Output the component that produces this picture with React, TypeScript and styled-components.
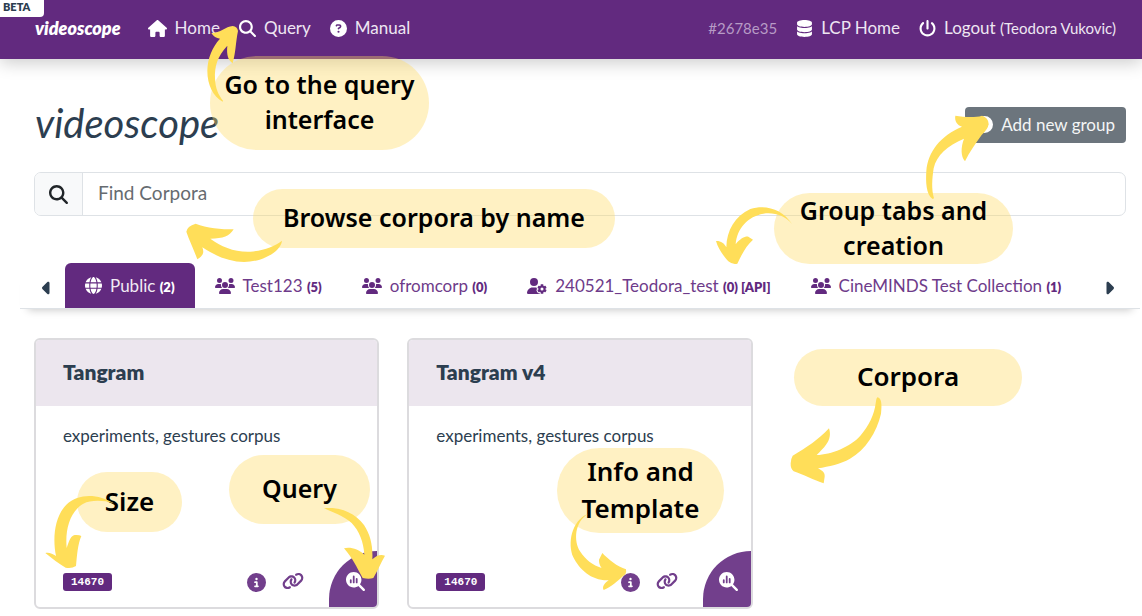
import React from "react";
import styled, { createGlobalStyle } from "styled-components";
import {
  FaCaretLeft,
  FaCaretRight,
  FaCircleInfo,
  FaCirclePlus,
  FaCircleQuestion,
  FaDatabase,
  FaGlobe,
  FaHouse,
  FaLink,
  FaMagnifyingGlass,
  FaMagnifyingGlassChart,
  FaPowerOff,
  FaUserGear,
  FaUsers,
} from "react-icons/fa6";

const purple = "#622a7f";
const ink = "#2c3e50";

const GlobalStyle = createGlobalStyle`
  * { box-sizing: border-box; }
  body {
    margin: 0;
    background: #fff;
    color: ${ink};
    font-family: Lato, "Liberation Sans", sans-serif;
  }
  a { color: inherit; text-decoration: none; }
  button, input { font: inherit; }
`;

const Page = styled.div`
  position: relative;
  overflow: hidden;
  padding-bottom: 8px;
`;

const Navbar = styled.nav`
  position: relative;
  display: flex;
  align-items: center;
  justify-content: space-between;
  height: 59px;
  padding: 0 26px 3px 35px;
  background: ${purple};
  color: #fff;
  box-shadow: 0 4px 16px rgba(0, 0, 0, 0.2);
`;

const Beta = styled.span`
  position: absolute;
  top: 0;
  left: 0;
  width: 44px;
  height: 17px;
  padding-left: 3px;
  border-radius: 0 0 4px 0;
  background: #fff;
  color: ${ink};
  font-size: 11px;
  font-weight: 800;
  line-height: 14px;
`;

const NavGroup = styled.div`
  display: flex;
  align-items: center;
  gap: 19px;
`;

const Brand = styled.a`
  margin-right: 8px;
  font-size: 18px;
  line-height: 24px;
  font-weight: 800;
  font-style: italic;
`;

const NavLink = styled.a`
  display: flex;
  align-items: center;
  gap: 8px;
  font-size: 17px;
  line-height: 24px;
  color: #eee6f2;
  svg { color: #fff; }
  small { font-size: 15px; }
`;

const Revision = styled.span`
  font-size: 15px;
  line-height: 24px;
  color: #b79bc6;
`;

const Heading = styled.header`
  display: flex;
  align-items: center;
  justify-content: space-between;
  padding: 45px 16px 26px 35px;
`;

const Title = styled.h1`
  margin: 0;
  padding-bottom: 4px;
  font-size: 40px;
  line-height: 38px;
  font-weight: 400;
  font-style: italic;
`;

const AddButton = styled.button`
  display: flex;
  align-items: center;
  gap: 8px;
  height: 36px;
  padding: 0 11px 1px;
  border: 0;
  border-radius: 4px;
  background: #6c757d;
  color: #f4f5f6;
  font-size: 17px;
  svg { color: #fff; }
`;

const Search = styled.label`
  display: flex;
  height: 44px;
  margin: 0 16px 0 34px;
  border: 1px solid #dee2e6;
  border-radius: 7px;
  overflow: hidden;
`;

const SearchIcon = styled.span`
  display: flex;
  align-items: center;
  justify-content: center;
  width: 48px;
  border-right: 1px solid #dee2e6;
  background: #f8f9fa;
  color: #212529;
`;

const SearchInput = styled.input`
  flex: 1;
  padding: 0 15px 3px;
  border: 0;
  outline: 0;
  background: transparent;
  font-size: 19px;
  &::placeholder { color: #666b70; opacity: 1; }
`;

const TabBar = styled.div`
  display: flex;
  align-items: center;
  height: 46px;
  margin: 47px 2px 0 20px;
  padding: 0 24px 0 20px;
  border-bottom: 1px solid #dee2e6;
  box-shadow: 0 9px 8px -8px rgba(0, 0, 0, 0.22);
`;

const Scroll = styled.button`
  display: flex;
  width: 14px;
  margin-top: 4px;
  padding: 0;
  border: 0;
  background: none;
  color: ${ink};
`;

const TabList = styled.div`
  display: flex;
  flex: 1;
  align-self: stretch;
  margin-left: 11px;
`;

const Tab = styled.button<{ $active?: boolean }>`
  display: flex;
  align-items: center;
  gap: 8px;
  padding: 0 20px;
  border: 0;
  border-radius: 6px 6px 0 0;
  background: ${(p) => (p.$active ? purple : "transparent")};
  color: ${(p) => (p.$active ? "#f1eaf4" : "#6e3b8a")};
  font-size: 17px;
  white-space: nowrap;
  svg { color: ${(p) => (p.$active ? "#fff" : purple)}; }
  b { font-size: 13px; font-weight: 800; color: ${(p) => (p.$active ? "#fff" : purple)}; }
`;

const Cards = styled.main`
  display: grid;
  grid-template-columns: repeat(3, 1fr);
  gap: 28px;
  padding: 29px 16px 0 34px;
`;

const Card = styled.article`
  display: flex;
  flex-direction: column;
  height: 271px;
  border: 2px solid #dcdbde;
  border-radius: 6px;
  overflow: hidden;
`;

const CardTitle = styled.h2`
  margin: 0;
  padding: 18px 27px 20px;
  background: #ece6ee;
  font-size: 21px;
  font-weight: 800;
  line-height: 28px;
`;

const CardText = styled.p`
  flex: 1;
  margin: 0;
  padding: 18px 27px;
  font-size: 17px;
  line-height: 24px;
`;

const CardFooter = styled.footer`
  display: flex;
  align-items: flex-end;
  padding-left: 27px;
`;

const Size = styled.span`
  margin: 0 auto 16px 0;
  padding: 0 8px;
  border-radius: 3px;
  background: ${purple};
  color: #fff;
  font-family: "Liberation Mono", monospace;
  font-size: 11px;
  font-weight: 700;
  line-height: 18px;
`;

const IconButton = styled.button`
  display: flex;
  margin: 0 0 15px 16px;
  padding: 0;
  border: 0;
  background: none;
  color: #723f8c;
`;

const QueryButton = styled.button`
  display: flex;
  align-items: center;
  justify-content: center;
  width: 48px;
  height: 56px;
  margin-left: 25px;
  padding: 4px 0 0 4px;
  border: 0;
  border-radius: 48px 0 0 0;
  background: #723f8c;
  color: #fff;
`;

const Notes = styled.div`
  position: absolute;
  inset: 0;
  pointer-events: none;
`;

const Note = styled.div<{ $x: number; $y: number; $w: number; $h: number; $large?: boolean }>`
  position: absolute;
  left: ${(p) => p.$x}px;
  top: ${(p) => p.$y}px;
  width: ${(p) => p.$w}px;
  height: ${(p) => p.$h}px;
  display: flex;
  align-items: center;
  justify-content: center;
  padding-bottom: 2px;
  border-radius: 48px;
  background: rgba(255, 218, 96, 0.38);
  color: #000;
  font-family: "Noto Sans", "Open Sans", sans-serif;
  font-size: ${(p) => (p.$large ? 26 : 25)}px;
  font-weight: 600;
  line-height: ${(p) => (p.$large ? 37 : 35)}px;
  text-align: center;
  white-space: nowrap;
`;

const ArrowSvg = styled.svg<{ $x: number; $y: number }>`
  position: absolute;
  left: ${(p) => p.$x}px;
  top: ${(p) => p.$y}px;
  fill: #ffde59;
`;

interface ArrowShape {
  x: number;
  y: number;
  w: number;
  h: number;
  box: string;
  d: string;
}

const arrows: ArrowShape[] = [
  {
    x: 200, y: 20, w: 40, h: 85, box: "600 60 120 255",
    d: "M668 305C640 290 622 255 622 212C623 175 636 142 660 116C649 114 640 110 634 99C660 100 676 80 698 78Q712 79 714 93C707 125 708 155 698 190C685 180 679 166 682 137C652 168 643 202 645 235C646 265 655 285 669 302Z",
  },
  {
    x: 920, y: 110, w: 80, h: 95, box: "60 30 240 285",
    d: "M98 297C78 283 77 245 79 213C84 154 121 108 186 80C172 76 163 63 166 47C191 51 223 54 246 47Q265 52 266 72Q264 87 245 105C227 130 209 155 195 184C182 168 182 143 192 116C142 137 110 165 101 205C96 237 94 268 102 295Z",
  },
  {
    x: 180, y: 220, w: 110, h: 45, box: "480 180 330 135",
    d: "M786 242C783 265 757 287 719 299C661 316 604 300 547 262C553 277 550 287 532 298C523 273 508 241 499 215Q501 199 527 191C560 205 604 208 641 208C629 228 610 236 571 236C604 260 643 277 691 275C733 271 762 260 786 242Z",
  },
  {
    x: 710, y: 200, w: 90, h: 70, box: "30 120 270 210",
    d: "M276 192C252 166 225 157 190 161C145 169 111 204 107 253C121 234 137 228 145 230L159 239C139 257 126 281 112 311Q98 315 85 304C72 290 54 266 48 243C61 242 73 249 79 262C80 211 105 168 151 147C199 132 248 149 276 192Z",
  },
  {
    x: 40, y: 490, w: 80, h: 82, box: "60 150 240 246",
    d: "M282 190C248 180 213 180 190 191C149 215 135 270 140 324C148 300 153 287 164 285Q178 284 184 288C173 313 171 347 168 378Q154 387 137 383C117 371 96 356 76 339C86 336 98 341 108 348C97 294 104 230 139 194C178 158 235 162 282 190Z",
  },
  {
    x: 320, y: 500, w: 70, h: 85, box: "900 180 210 255",
    d: "M912 205C956 200 1003 216 1032 255C1052 285 1059 320 1057 358C1070 346 1082 342 1095 347C1082 370 1071 395 1060 414Q1047 419 1028 414C1011 383 996 352 972 325C990 320 1016 327 1033 344C1031 307 1018 273 995 249C968 226 939 217 912 205Z",
  },
  {
    x: 565, y: 508, w: 67, h: 87, box: "495 234 201 261",
    d: "M564 251C523 277 521 332 540 364C558 391 578 406 605 414C597 402 597 395 597 389L607 369C625 388 652 410 678 418Q680 428 676 433C654 451 633 473 611 480C605 470 615 458 626 451C574 453 539 419 520 382C502 340 514 272 564 251Z",
  },
  {
    x: 785, y: 390, w: 103, h: 100, box: "75 180 309 300",
    d: "M352 202C365 204 366 223 363 251C350 307 316 360 270 386C241 403 207 409 174 415C189 423 195 429 194 440L191 460C163 451 128 433 101 424Q91 416 92 400Q92 387 98 377C141 352 174 330 207 295C213 314 209 329 199 343C191 355 180 365 170 375C212 374 273 350 301 317C326 289 343 254 347 220Q349 204 352 202Z",
  },
];

const tabs = [
  { label: "Public", count: "(2)", Icon: FaGlobe, size: 17 },
  { label: "Test123", count: "(5)", Icon: FaUsers, size: 20 },
  { label: "ofromcorp", count: "(0)", Icon: FaUsers, size: 20 },
  { label: "240521_Teodora_test", count: "(0) [API]", Icon: FaUserGear, size: 20 },
  { label: "CineMINDS Test Collection", count: "(1)", Icon: FaUsers, size: 20 },
];

const corpora = ["Tangram", "Tangram v4"];

export default function App() {
  return (
    <Page>
      <GlobalStyle />
      <Navbar>
        <Beta>BETA</Beta>
        <NavGroup>
          <Brand href="#">videoscope</Brand>
          <NavLink href="#home"><FaHouse size={19} />Home</NavLink>
          <NavLink href="#query"><FaMagnifyingGlass size={17} />Query</NavLink>
          <NavLink href="#manual"><FaCircleQuestion size={17} />Manual</NavLink>
        </NavGroup>
        <NavGroup>
          <Revision>#2678e35</Revision>
          <NavLink href="#lcp"><FaDatabase size={17} />LCP Home</NavLink>
          <NavLink href="#logout"><FaPowerOff size={17} /><span>Logout <small>(Teodora Vukovic)</small></span></NavLink>
        </NavGroup>
      </Navbar>

      <Heading>
        <Title>videoscope</Title>
        <AddButton type="button"><FaCirclePlus size={17} />Add new group</AddButton>
      </Heading>

      <Search>
        <SearchIcon><FaMagnifyingGlass size={19} /></SearchIcon>
        <SearchInput type="text" placeholder="Find Corpora" aria-label="Find Corpora" />
      </Search>

      <TabBar>
        <Scroll type="button" aria-label="Previous groups"><FaCaretLeft size={20} /></Scroll>
        <TabList role="tablist">
          {tabs.map(({ label, count, Icon, size }, i) => (
            <Tab key={label} type="button" role="tab" aria-selected={i === 0} $active={i === 0}>
              <Icon size={size} />
              <span>{label} <b>{count}</b></span>
            </Tab>
          ))}
        </TabList>
        <Scroll type="button" aria-label="Next groups"><FaCaretRight size={20} /></Scroll>
      </TabBar>

      <Cards>
        {corpora.map((name) => (
          <Card key={name}>
            <CardTitle>{name}</CardTitle>
            <CardText>experiments, gestures corpus</CardText>
            <CardFooter>
              <Size>14670</Size>
              <IconButton type="button" aria-label="Info"><FaCircleInfo size={19} /></IconButton>
              <IconButton type="button" aria-label="Copy link"><FaLink size={22} /></IconButton>
              <QueryButton type="button" aria-label="Query corpus"><FaMagnifyingGlassChart size={19} /></QueryButton>
            </CardFooter>
          </Card>
        ))}
      </Cards>

      <Notes>
        <Note $x={210} $y={56} $w={219} $h={94}>Go to the query<br />interface</Note>
        <Note $x={253} $y={189} $w={362} $h={59}>Browse corpora by name</Note>
        <Note $x={774} $y={193} $w={239} $h={71}>Group tabs and<br />creation</Note>
        <Note $x={77} $y={472} $w={105} $h={60} $large>Size</Note>
        <Note $x={229} $y={455} $w={141} $h={69}>Query</Note>
        <Note $x={557} $y={448} $w={167} $h={85} $large>Info and<br />Template</Note>
        <Note $x={794} $y={349} $w={228} $h={57} $large>Corpora</Note>
        {arrows.map((a) => (
          <ArrowSvg key={a.box} $x={a.x} $y={a.y} width={a.w} height={a.h} viewBox={a.box} aria-hidden="true">
            <path d={a.d} />
          </ArrowSvg>
        ))}
      </Notes>
    </Page>
  );
}
